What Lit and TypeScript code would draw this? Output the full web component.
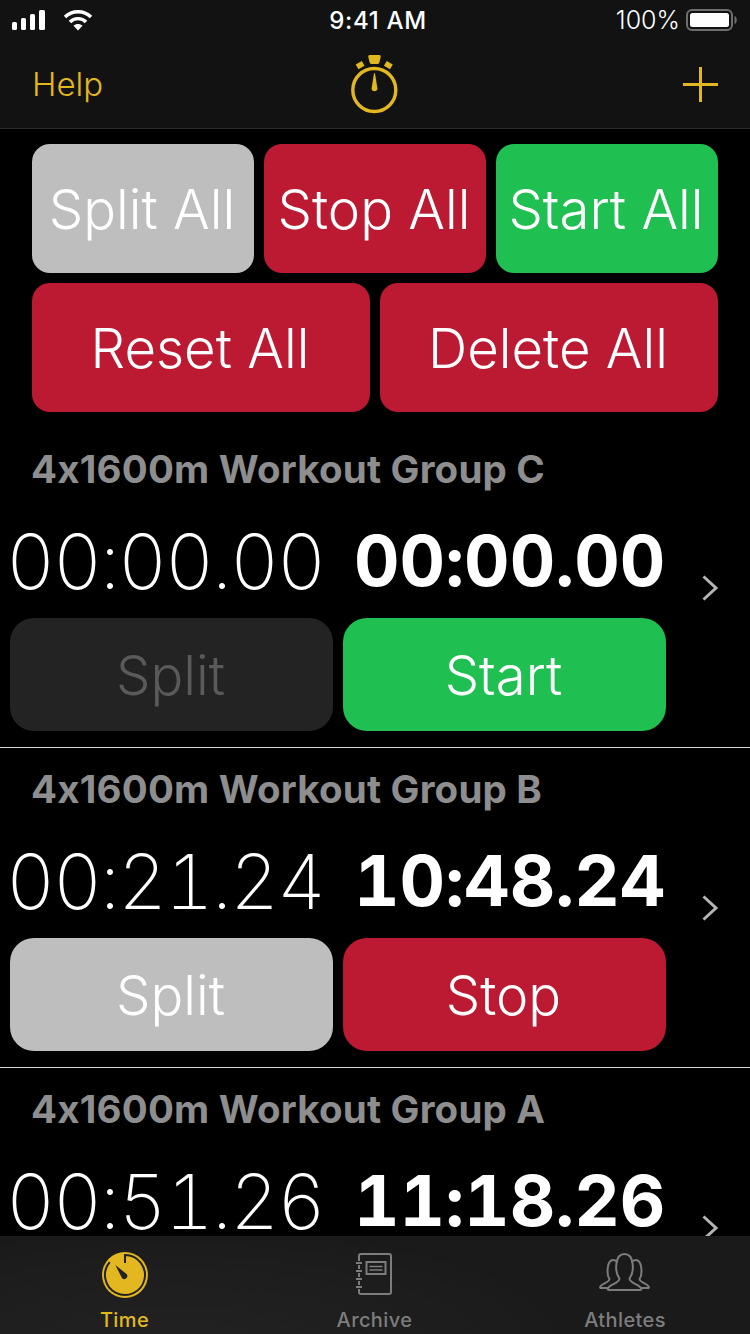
import { LitElement, html, css } from "lit";
import { customElement } from "lit/decorators.js";

const GOLD = "#e2b71f";

const chevron = html`<svg class="chev" width="18" height="26" viewBox="0 0 18 26"><path d="M2.5 1.500 L15 13 L2.5 24.500" fill="none" stroke="#b4b4b4" stroke-width="3"/></svg>`;

@customElement("app-root")
export class AppRoot extends LitElement {
  static styles = css`
    :host { display: block; width: 750px; height: 1334px; background: #000; overflow: hidden; font-family: "Inter", "Liberation Sans", sans-serif; font-feature-settings: "calt" 0; color: #fff; }
    .app { width: 750px; height: 1334px; display: flex; flex-direction: column; }
    .head { height: 128px; flex: none; background: #121212; border-bottom: 1px solid #2b2b2b; display: flex; flex-direction: column; }
    .status { height: 40px; display: grid; grid-template-columns: 1fr auto 1fr; align-items: center; padding: 0 12px 0 12px; font-size: 24px; }
    .status .left { display: flex; align-items: center; gap: 17px; }
    .status .right { display: flex; justify-content: flex-end; align-items: center; gap: 6px; font-weight: 300; font-size: 25px; }
    .clock { font-weight: 500; font-size: 24px; letter-spacing: 0.7px; padding-left: 6px; }
    .nav { flex: 1; display: grid; grid-template-columns: 1fr auto 1fr; align-items: center; padding: 0 32px 0 32px; }
    .help { font-size: 33px; font-weight: 350; color: ${css([GOLD] as any)}; }
    .plus { justify-self: end; display: block; }
    .content { flex: 1; min-height: 0; overflow: hidden; }
    .all { padding: 15px 32px 0; display: flex; flex-direction: column; gap: 10px; }
    .allrow { display: flex; gap: 10px; }
    .allrow > div { flex: 1; height: 129px; border-radius: 18px; display: flex; align-items: center; justify-content: center; font-size: 54.5px; font-weight: 350; padding-right: 2px; }
    .gray { background: #bebebe; }
    .red { background: #bc1a32; }
    .green { background: #20bf52; }
    .dim { background: #232323; color: #5a5a5a; }
    .group { height: 320px; border-bottom: 1px solid #d8d8d8; box-sizing: border-box; padding-top: 19px; }
    .group.first { height: 336px; padding-top: 35px; }
    .title { padding-left: 31px; font-size: 38.5px; font-weight: 700; color: #8e8e8e; line-height: 44px; letter-spacing: 0.2px; }
    .times { display: flex; align-items: center; padding-left: 6px; height: 90px; margin-top: 25px; font-variant-numeric: tabular-nums; }
    .t1 { width: 348px; font-weight: 150; font-size: 76px; letter-spacing: -2.2px; line-height: 90px; white-space: nowrap; }
    .t2 { width: 310px; text-align: right; font-weight: 650; font-size: 70.5px; line-height: 90px; white-space: nowrap; }
    .chev { margin: 54px 0 0 37px; flex: none; }
    .btns { display: flex; gap: 10px; padding-left: 10px; margin-top: 12px; }
    .btns > div { width: 323px; height: 113px; border-radius: 24px; display: flex; align-items: center; justify-content: center; font-size: 54.5px; font-weight: 350; padding-right: 2px; box-sizing: border-box; }
    .tabs { height: 98px; flex: none; background: radial-gradient(ellipse 400px 120px at 180px 110px, #222 0%, #1d1d1d 70%, #1a1a1a 100%); background-color: #1a1a1a; display: grid; grid-template-columns: 249px 251px 250px; }
    .tab { display: flex; flex-direction: column; align-items: center; color: #7d7d7d; font-size: 20px; font-weight: 450; letter-spacing: 0.4px; padding-top: 15px; }
    .tab svg { height: 48px; display: block; }
    .tab span { margin-top: 9px; line-height: 24px; }
    .tab.on { color: ${css([GOLD] as any)}; }
  `;

  group(name: string, a: string, b: string, left?: [string, string], right?: [string, string], first = false) {
    return html`<div class="group ${first ? "first" : ""}">
      <div class="title">${name}</div>
      <div class="times"><div class="t1">${a}</div><div class="t2">${b}</div>${chevron}</div>
      ${left && right ? html`<div class="btns"><div class=${left[1]}>${left[0]}</div><div class=${right[1]}>${right[0]}</div></div>` : ""}
    </div>`;
  }

  render() {
    return html`<div class="app">
      <div class="head">
        <div class="status">
          <div class="left">
            <svg width="34" height="20" viewBox="0 0 34 20" fill="#fff"><rect x="0" y="12" width="5" height="8" rx="1.5"/><rect x="9" y="8" width="5" height="12" rx="1.5"/><rect x="18" y="4" width="5" height="16" rx="1.5"/><rect x="27" y="0" width="6" height="20" rx="1.5"/></svg>
            <svg width="30" height="22" viewBox="0 0 30 22"><path d="M2 8 C9 1 21 1 28 8" fill="none" stroke="#fff" stroke-width="3.4"/><path d="M7 13 C11 8.500 19 8.500 23 13" fill="none" stroke="#fff" stroke-width="3.400"/><path d="M15 21.500 L10.500 16.800 C13 14.500 17 14.500 19.500 16.800 Z" fill="#fff"/></svg>
          </div>
          <div class="clock">9:41 AM</div>
          <div class="right">100%
            <svg width="52" height="24" viewBox="0 0 52 24"><rect x="1" y="2" width="45" height="20" rx="5" fill="none" stroke="#6e6e6e" stroke-width="2"/><rect x="4" y="5" width="39" height="14" rx="2.500" fill="#fff"/><path d="M48.500 8 C51.500 9 51.500 15 48.500 16 Z" fill="#6e6e6e"/></svg>
          </div>
        </div>
        <div class="nav">
          <div class="help">Help</div>
          <svg width="50" height="60" viewBox="0 0 50 60" style="margin-top:2px">
            <circle cx="24.300" cy="35" r="21.500" fill="none" stroke="${GOLD}" stroke-width="3.400"/>
            <path d="M19.500 0 H29.500 Q31 0 30.700 2 L29.500 7 Q29.200 9 27.500 9 H21.500 Q19.800 9 19.500 7 L18.300 2 Q18 0 19.500 0 Z" fill="${GOLD}"/>
            <rect x="6.500" y="7.500" width="7" height="5.500" fill="${GOLD}" transform="rotate(-30 10 10)"/>
            <rect x="35" y="7.500" width="7" height="5.500" fill="${GOLD}" transform="rotate(30 38.500 10)"/>
            <path d="M24 18.300 H25 L27.500 34 A3.100 3.100 0 0 1 21.500 34 Z" fill="${GOLD}"/>
          </svg>
          <svg class="plus" width="35" height="35" viewBox="0 0 35 35"><path d="M0 17.500 H35 M17.500 0 V35" stroke="${GOLD}" stroke-width="3"/></svg>
        </div>
      </div>
      <div class="content">
        <div class="all">
          <div class="allrow"><div class="gray">Split All</div><div class="red">Stop All</div><div class="green">Start All</div></div>
          <div class="allrow"><div class="red">Reset All</div><div class="red">Delete All</div></div>
        </div>
        ${this.group("4x1600m Workout Group C", "00:00.00", "00:00.00", ["Split", "dim"], ["Start", "green"], true)}
        ${this.group("4x1600m Workout Group B", "00:21.24", "10:48.24", ["Split", "gray"], ["Stop", "red"])}
        ${this.group("4x1600m Workout Group A", "00:51.26", "11:18.26")}
      </div>
      <div class="tabs">
        <div class="tab on">
          <svg width="48" height="48" viewBox="0 0 48 48"><circle cx="24" cy="24" r="23" fill="${GOLD}"/><path d="M24 12 V4 A20 20 0 1 1 8.700 11.100" fill="none" stroke="#222" stroke-width="2"/><path d="M14.300 14 L25.500 23 A3 3 0 0 1 21 27 Z" fill="#222"/></svg>
          <span>Time</span>
        </div>
        <div class="tab">
          <svg width="48" height="48" viewBox="0 0 48 48" fill="none" stroke="#7d7d7d" stroke-width="2"><path d="M8 10 V5 Q8 3 10 3 H38 Q40 3 40 5 V41 Q40 43 38 43 H10 Q8 43 8 41 V38 M8 14 V18 M8 22 V26 M8 30 V34"/><path d="M5 12 H11 M5 20 H11 M5 28 H11 M5 36 H11"/><rect x="15.500" y="11" width="19" height="12"/><path d="M18.500 15.500 H31.500 M18.500 19 H31.500" stroke-width="1.500"/></svg>
          <span>Archive</span>
        </div>
        <div class="tab">
          <svg width="52" height="48" viewBox="0 0 52 48" fill="none" stroke="#7d7d7d" stroke-width="2"><path d="M9 37 H2 Q0.800 37 1.300 35.700 C3 32 10 32 10.500 28 C7.500 24 7.500 9 14.300 9 C16 9 17.500 10 18.500 11.500"/><path d="M42 37 H49 Q50.200 37 49.700 35.700 C48 32 41 32 40.500 28 C43.500 24 43.500 9 36.700 9 C35 9 33.500 10 32.500 11.500"/><path d="M8.700 38 C10 33 20 33 20.500 27.500 C15.500 21 15.500 3 25.500 3 C35.500 3 35.500 21 30.500 27.500 C31 33 41 33 42.300 38 Q42.500 39 41 39 H10 Q8.500 39 8.700 38 Z"/></svg>
          <span>Athletes</span>
        </div>
      </div>
    </div>`;
  }
}
